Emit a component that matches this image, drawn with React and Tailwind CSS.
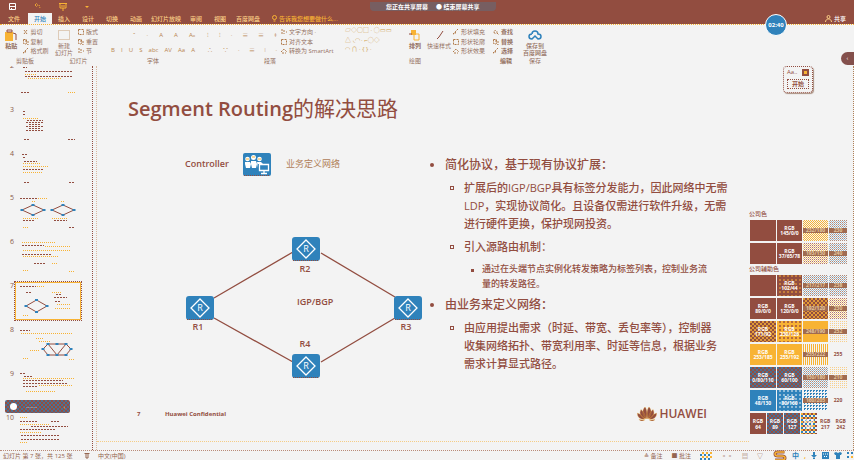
import React from "react";

const TABS = [
  ["文件", "w-7"],
  ["开始", "w-6"],
  ["插入", "w-6"],
  ["设计", "w-6"],
  ["切换", "w-6"],
  ["动画", "w-6"],
  ["幻灯片放映", "w-9"],
  ["审阅", "w-6"],
  ["视图", "w-6"],
  ["百度网盘", "w-8"],
];

function Badge({ className }) {
  return (
    <div className={"absolute z-10 flex h-[22px] w-[22px] items-center justify-center rounded-full border border-white bg-[#2f82bb] text-[6px] font-bold text-white " + className}>
      02:40
    </div>
  );
}

function Header() {
  return (
    <header className="relative h-6 shrink-0 bg-[#924d40] text-[#fbcf86]">
      <div className="flex h-[13px] items-center">
        <div className="flex w-[370px] items-center gap-[18px] pl-[9px]">
          <svg className="h-[7px] w-[7px]" viewBox="0 0 7 7" fill="none" stroke="#fff">
            <path d="M.5 .5h6v6h-6zM.5 3.5h6M2.5 5v2" />
          </svg>
          <svg className="h-[7px] w-[7px]" viewBox="0 0 7 7" fill="none" stroke="#f8b334">
            <path d="M1 2h4l1 3M1 2l2-2M1 2l2 2" strokeDasharray="1 1" />
          </svg>
          <svg className="h-2 w-2" viewBox="0 0 8 8" fill="none" stroke="#f8b334">
            <path d="M0 .5h8M1 1v4h6V1M4 5v3M2 3h4" />
          </svg>
          <svg className="h-1 w-1" viewBox="0 0 4 4" fill="#f8b334"><path d="M0 1h4L2 3z" /></svg>
        </div>
        <div className="flex h-[9px] items-center gap-2 rounded-b bg-[#775e61] px-4 text-[6px] font-bold leading-none text-white">
          <span>您正在共享屏幕</span>
          <span>● 结束屏幕共享</span>
        </div>
      </div>
      <div className="flex h-[11px] items-center text-[6px] font-medium leading-none">
        {TABS.map(([name, width], i) => (
          <button key={name} type="button" className={"h-full shrink-0 text-center " + width + (i === 1 ? " bg-[#f3f3f3] text-[#2f82bb]" : "")}>
            {name}
          </button>
        ))}
        <label htmlFor="tell" className="ml-2 flex shrink-0 items-center">
          <svg className="mr-[2px] h-[7px] w-[5px]" viewBox="0 0 5 7" fill="none" stroke="#f8b334"><circle cx="2.5" cy="2.5" r="2" /><path d="M1.500 6h2" /></svg>
        </label>
        <input id="tell" aria-label="操作说明搜索" placeholder="告诉我您想要做什么..." className="h-full w-32 bg-transparent text-[#f8b334] outline-none placeholder:text-[#f8b334]" />
        <button type="button" className="ml-auto mr-2 flex items-center gap-[2px] text-white">
          <svg className="h-[7px] w-[7px]" viewBox="0 0 7 7" fill="none" stroke="#fbcf86"><circle cx="3.500" cy="2" r="1.500" /><path d="M.5 7c0-4 6-4 6 0" /></svg>
          共享
        </button>
      </div>
      <Badge className="right-[67px] top-[14px]" />
    </header>
  );
}

function Mark({ kind }) {
  const paths = {
    cut: "M1 1l3 4M4 1L1 5",
    copy: "M.5 .5h3v4h-3zM2 2h3v4H2",
    brush: "M5 0L2 3M0 5l2-2 1 1z",
    grid: "M.5 .5h5v5h-5z",
    shape: "M0 4l3-3 3 3M1 5h4",
    find: "M1 3a1.500 1.500 0 1 0 3 0a1.500 1.500 0 1 0-3 0M4 4l2 2",
    text: "M1 0v6M3 1v4M5 3h1",
  };
  return (
    <svg className="h-[6px] w-[6px] shrink-0" viewBox="0 0 6 6" fill="none" stroke="#b07a4a" strokeDasharray="2 1">
      <path d={paths[kind]} />
    </svg>
  );
}

function Stack({ items, className }) {
  return (
    <div className={"flex flex-col " + className}>
      {items.map(([kind, label]) => (
        <button key={label} type="button" className="flex h-[10px] items-center gap-[2px] whitespace-nowrap">
          <Mark kind={kind} />
          {label}
        </button>
      ))}
    </div>
  );
}

function Group({ name, className, children }) {
  return (
    <section className={"flex shrink-0 flex-col " + className}>
      <div className="flex h-[31px] pt-[2px]">{children}</div>
      <div className="text-center leading-[10px]">{name}</div>
    </section>
  );
}

function Big({ lines, className, children }) {
  return (
    <button type="button" className={"flex flex-col items-center text-center leading-[7px] " + className}>
      <svg className="mb-[2px] mt-[2px] h-[12px] w-[14px] shrink-0" viewBox="0 0 14 12" fill="none">{children}</svg>
      {lines.map((l) => <span key={l} className="whitespace-nowrap">{l}</span>)}
    </button>
  );
}

function Glyphs({ items }) {
  return (
    <div className="flex h-[15px] items-center justify-between text-[#b98550]">
      {items.map((g, i) => (
        <button key={i} type="button" className="leading-none">{g}</button>
      ))}
    </div>
  );
}

function Ribbon() {
  return (
    <div className="flex h-[42px] shrink-0 overflow-hidden border-t border-dotted border-[#f8b334] text-[6px] leading-none text-[#94705f]">
      <Group name="剪贴板" className="w-[50px]">
        <Big lines={["粘贴"]} className="w-[23px] font-bold">
          <path d="M1 3h8v9H1z" fill="#f8b334" /><path d="M3 1h5v2H3zM9 4l3 1v6" stroke="#924d40" />
        </Big>
        <Stack className="w-7" items={[["cut", "剪切"], ["copy", "复制"], ["brush", "格式刷"]]} />
      </Group>
      <Group name="幻灯片" className="w-[57px]">
        <Big lines={["新建", "幻灯片"]} className="w-[28px]">
          <path d="M1.500 1.500h11v9h-11z" stroke="#c9a27c" strokeDasharray="1 1" />
        </Big>
        <Stack className="w-7" items={[["grid", "版式"], ["copy", "重置"], ["text", "节"]]} />
      </Group>
      <Group name="字体" className="w-[92px]">
        <div className="w-full px-1">
          <Glyphs items={["", "", "ˇ", "·", "A", "A", "Aₒ"]} />
          <Glyphs items={["B", "I", "U", "S", "abc", "AV", "Aa", "A"]} />
        </div>
      </Group>
      <Group name="段落" className="w-[142px]">
        <div className="flex w-full pl-2">
          <div className="w-[70px]">
            <Glyphs items={["⁝", "⁝", "·", "≡", "≡", "‡"]} />
            <Glyphs items={["∴", "∵", "·", "≡", "⁞", "·"]} />
          </div>
          <Stack className="ml-1" items={[["text", "文字方向 ·"], ["grid", "对齐文本"], ["shape", "转换为 SmartArt"]]} />
        </div>
      </Group>
      <Group name="绘图" className="w-[148px]">
        <div className="flex w-[64px] flex-col justify-between pb-1 pl-1 text-[#cfa04e]">
          <span>▱◇○□ · ◌▭▭</span><span>△ ◟◠ · ⌐◌◇</span><span>◠ ∩ · {"{ } ·"}</span>
        </div>
        <Big lines={["排列"]} className="w-5 font-bold"><path d="M3 1h5v5H3z" fill="#f8b334" /><path d="M6 5h5v6H6z" stroke="#f8b334" /><path d="M1 5h3" stroke="#924d40" /></Big>
        <Big lines={["快速样式"]} className="w-7"><path d="M11 2L7 8M5 10l2-2" stroke="#924d40" /></Big>
        <Stack className="" items={[["brush", "形状填充"], ["grid", "形状轮廓"], ["shape", "形状效果"]]} />
      </Group>
      <Group name="编辑" className="w-[34px] font-bold">
        <Stack className="pl-1" items={[["find", "查找"], ["copy", "替换"], ["brush", "选择"]]} />
      </Group>
      <Group name="保存" className="w-6">
        <Big lines={["保存到", "百度网盘"]} className="w-full font-medium">
          <path d="M4 5a3 3 0 0 1 6 0c4 0 4 5 0 5L7 7l-3 3C0 10 0 5 4 5" stroke="#2f82bb" strokeWidth="1.500" />
        </Big>
      </Group>
    </div>
  );
}

function Diamond({ x, y, w, h }) {
  const d = `M${x} ${y + h / 2}l${w / 2} ${-h / 2}l${w / 2} ${h / 2}l${-w / 2} ${h / 2}z`;
  const dots = [[x, y + h / 2], [x + w / 2, y], [x + w, y + h / 2], [x + w / 2, y + h]];
  return (
    <g>
      <path d={d} fill="none" stroke="#924d40" />
      {dots.map(([a, b]) => <rect key={a + "-" + b} x={a - 1.5} y={b - 1} width="3" height="2" fill="#2f82bb" />)}
    </g>
  );
}

function Mesh() {
  return (
    <g>
      <path d="M28 23l5-5h18l5 5-5 6H33zM33 18l9 11 9-11" fill="none" stroke="#924d40" />
      {[[28, 23], [33, 18], [42, 18], [51, 18], [56, 23], [33, 29], [42, 29], [51, 29]].map(([a, b]) => (
        <rect key={a + "-" + b} x={a - 1.5} y={b - 1} width="3" height="2" fill="#2f82bb" />
      ))}
    </g>
  );
}

function Rows({ list }) {
  return list.map(([x, y, w, c], i) => (
    <path key={i} d={`M${x} ${y + 0.5}h${w}`} stroke={c ? "#f8b334" : "#924d40"} strokeDasharray={c ? "1 1" : "2 1"} />
  ));
}

const THUMBS = [
  { n: 2, rows: [[8, 5, 4], [10, 9, 48], [10, 12, 12, 1], [10, 14, 47], [13, 16, 34, 1], [6, 30, 8], [53, 30, 7, 1]] },
  { n: 3, rows: [[8, 5, 3], [8, 8, 3], [8, 12, 16, 1], [12, 14, 16], [11, 16, 18], [14, 18, 11], [11, 20, 18], [14, 22, 12], [11, 24, 17], [9, 33, 5], [53, 33, 7]] },
  { n: 4, rows: [[7, 4, 5], [8, 7, 3], [9, 11, 13], [8, 13, 18, 1], [8, 16, 25, 1], [8, 19, 20], [8, 22, 20, 1], [9, 32, 5], [54, 32, 6]] },
  { n: 5, rows: [[5, 4, 18], [23, 4, 9, 1], [17, 7, 3, 1], [46, 7, 3, 1], [8, 24, 16, 1], [8, 26, 12], [37, 24, 16, 1], [39, 26, 13], [8, 33, 5, 1], [54, 33, 6]], diamonds: [[7, 11, 22, 10], [37, 11, 22, 10]] },
  { n: 6, rows: [[7, 4, 34, 1], [7, 7, 22], [30, 8, 25, 1], [8, 12, 48, 1], [7, 16, 29], [8, 18, 35, 1], [19, 25, 12], [37, 25, 5, 1], [8, 32, 5, 1], [54, 33, 6, 1]] },
  { n: 7, rows: [[5, 4, 16], [22, 4, 7, 1], [11, 10, 6], [37, 10, 10, 1], [41, 12, 5], [39, 15, 13], [40, 19, 5], [42, 22, 14, 1], [40, 26, 15, 1], [8, 33, 5, 1]], diamonds: [[11, 18, 21, 12]] },
  { n: 8, rows: [[5, 4, 10], [6, 7, 52, 1], [21, 12, 8, 1], [24, 15, 12, 1], [15, 24, 10, 1], [8, 32, 5, 1], [54, 33, 6, 1]], mesh: true },
  { n: 9, rows: [[5, 3, 5], [9, 6, 9], [8, 8, 51, 1], [8, 10, 40], [8, 13, 45], [8, 16, 15], [24, 15, 34, 1], [11, 21, 30, 1]] },
  { n: 10, rows: [[5, 3, 8, 1], [5, 7, 17], [36, 7, 8], [5, 10, 30, 1], [16, 12, 37], [5, 15, 36], [5, 18, 22, 1], [6, 21, 39], [6, 25, 39], [5, 28, 8, 1]] },
];

function Thumbnails() {
  return (
    <nav aria-label="幻灯片" className="relative w-[97px] shrink-0">
      <div className="absolute inset-0 overflow-hidden">
        <ol className="-mt-1 flex flex-col gap-[6px]">
          {THUMBS.map((t) => (
            <li key={t.n} className="flex h-[38px]">
              <span className="w-[15px] pr-[1px] text-right text-[7px] font-medium leading-[7px] text-[#8a5a4a]">{t.n}</span>
              <button type="button" aria-label={"第 " + t.n + " 张"} className={"h-[38px] w-[66px] " + (t.n === 7 ? "outline outline-1 outline-dotted outline-[#924d40] ring-1 ring-inset ring-[#f8b334]" : "")}>
                <svg className="h-[38px] w-[66px]" viewBox="0 0 66 38">
                  <Rows list={t.rows} />
                  {t.mesh && <Mesh />}
                  {(t.diamonds || []).map(([x, y, w, h]) => <Diamond key={x} x={x} y={y} w={w} h={h} />)}
                </svg>
              </button>
            </li>
          ))}
        </ol>
      </div>
      <div className="absolute inset-y-0 right-1 w-px border-l border-dotted border-[#924d40]" />
      <div className="absolute inset-y-0 right-0 w-px border-l border-dotted border-[#d9b9a0]" />
      <div className="absolute left-[5px] top-[334px] flex h-[13px] w-[65px] items-center rounded-[2px] bg-[conic-gradient(#924d40_25%,#4a7094_0_50%,#924d40_0_75%,#4a7094_0)] bg-[length:4px_4px] px-[5px] text-[6px] text-[#f3f3f3]">
        <span className="h-[7px] w-[7px] rounded-full bg-white" />
        <span className="ml-[9px] leading-none">·······</span>
        <span className="ml-auto leading-none text-[#f8b334]">‹</span>
      </div>
    </nav>
  );
}

function Router({ x, y, label, lx, ly }) {
  return (
    <g>
      <rect x={x} y={y} width="28" height="24" rx="3" fill="#2f82bb" />
      <path d={`M${x + 1} ${y + 23.5}h26`} stroke="#924d40" strokeDasharray="1 1" />
      <path d={`M${x + 14} ${y + 3}l9 9l-9 9l-9 -9z`} fill="none" stroke="#fff" strokeWidth="1.3" />
      <text x={x + 14} y={y + 15} textAnchor="middle" fontSize="9" fontWeight="500" fill="#fff">R</text>
      <text x={lx} y={ly} textAnchor="middle" fontSize="9" fontWeight="600" fill="#924d40">{label}</text>
    </g>
  );
}

function Topology() {
  return (
    <svg className="mt-[61px] block h-[142px] w-[238px]" viewBox="0 0 238 142" role="img" aria-label="IGP/BGP">
      <path d="M28 61L107 15M135 16L209 60M28 81L107 125M135 125L209 81" stroke="#924d40" strokeWidth="1.3" fill="none" />
      <Router x={106} y={0} label="R2" lx={119} ly={35} />
      <Router x={0} y={59} label="R1" lx={12} ly={93} />
      <Router x={208} y={59} label="R3" lx={220} ly={93} />
      <Router x={106} y={117} label="R4" lx={119} ly={110} />
      <text x="111" y="68" fontSize="9" fontWeight="600" fill="#924d40">IGP/BGP</text>
    </svg>
  );
}

function ControllerIcon() {
  return (
    <svg className="h-[23px] w-7" viewBox="0 0 28 23">
      <rect width="28" height="23" rx="2" fill="#2f82bb" />
      <path d="M1 22.500h26" stroke="#924d40" strokeDasharray="1 1" />
      <g fill="#fff">
        <circle cx="4.500" cy="6" r="2.300" /><circle cx="10.500" cy="4.500" r="2.500" /><circle cx="16.500" cy="6" r="2.300" />
        <path d="M2 9h5l1 2-1 4H3l-1-4zM8 8h5l1 3-1 4H9l-1-4zM14 9h4l2 2h-5v4z" />
      </g>
      <path d="M3 6h3M9 4h3M15 6h3" stroke="#f8b334" />
      <path d="M16.500 11.500h9v6h-9zM21 18v2M18 20.500h6" fill="#2f82bb" stroke="#fff" strokeWidth="1.300" />
    </svg>
  );
}

function Bullet({ level, lines }) {
  const styles = [
    ["text-xs leading-[18px] pl-0 font-medium", "w-[15px]"],
    ["text-[11px] leading-[18px] pl-[20px] font-medium", "w-[14px]"],
    ["text-[9px] leading-[15px] pl-[41px] font-medium", "w-[11px]"],
  ];
  const marks = ["h-1 w-1 rounded-full bg-[#924d40]", "h-1 w-1 border border-[#924d40]", "h-[3px] w-[3px] bg-[#924d40]"];
  return (
    <li className={"flex whitespace-nowrap " + styles[level][0]}>
      <span className={"flex h-[18px] shrink-0 items-center " + styles[level][1]}>
        <span className={marks[level]} />
      </span>
      <span>{lines.map((l) => <span key={l} className="block">{l}</span>)}</span>
    </li>
  );
}

function Logo() {
  return (
    <div className="flex items-center gap-[2px]">
      <svg className="h-[14px] w-5" viewBox="0 0 20 14" fill="#924d40" stroke="#f8b334" strokeWidth=".3">
        <path d="M9.500 12C5 8 5 3 8 0c2 2 2.500 7 1.500 12zM10.500 12C15 8 15 3 12 0c-2 2-2.500 7-1.500 12zM8.500 12C3 10 2 6 4 2.500 7 5 8.500 8 8.500 12zM11.500 12C17 10 18 6 16 2.500 13 5 11.500 8 11.500 12zM7.500 12.500C3 12.500 0 10 .5 6 4 7.500 6.500 9.500 7.500 12.500zM12.500 12.500C17 12.500 20 10 19.500 6 16 7.500 13.500 9.500 12.500 12.500zM7.500 13.200C5 14.500 3 14 2 12.500zM12.500 13.200C15 14.500 17 14 18 12.500z" />
      </svg>
      <span className="text-xs font-semibold leading-none">HUAWEI</span>
    </div>
  );
}

function Slide() {
  return (
    <main className="flex min-w-0 flex-1 flex-col text-[#924d40]">
      <h1 className="mt-[26px] flex items-baseline whitespace-nowrap pl-[31px] text-[21px] leading-8">
        <span className="text-[20px] font-semibold">Segment Routing</span>
        <span>的解决思路</span>
      </h1>
      <div className="flex">
        <section className="w-[333px] shrink-0 pl-[88px] pt-[27px]">
          <div className="flex h-[24px] items-center text-[9px]">
            <b className="w-[58px] font-semibold">Controller</b>
            <ControllerIcon />
            <span className="pl-[15px] text-[#b08058]">业务定义网络</span>
          </div>
          <div className="pl-px"><Topology /></div>
        </section>
        <ul className="flex flex-col gap-[5px] pt-[31px]">
          <Bullet level={0} lines={["简化协议，基于现有协议扩展："]} />
          <Bullet level={1} lines={["扩展后的IGP/BGP具有标签分发能力，因此网络中无需", "LDP，实现协议简化。且设备仅需进行软件升级，无需", "进行硬件更换，保护现网投资。"]} />
          <Bullet level={1} lines={["引入源路由机制："]} />
          <Bullet level={2} lines={["通过在头端节点实例化转发策略为标签列表，控制业务流", "量的转发路径。"]} />
          <Bullet level={0} lines={["由业务来定义网络："]} />
          <Bullet level={1} lines={["由应用提出需求（时延、带宽、丢包率等），控制器", "收集网络拓扑、带宽利用率、时延等信息，根据业务", "需求计算显式路径。"]} />
        </ul>
      </div>
      <footer className="mt-auto flex h-[54px] items-center pl-10 pr-[42px] text-[6px] font-bold">
        <span className="w-7">7</span>
        <span>Huawei Confidential</span>
        <span className="ml-auto"><Logo /></span>
      </footer>
      <div className="mb-2 border-t border-dotted border-[#f5cd86]" />
    </main>
  );
}

const FILLS = {
  brown: "bg-[#924d40]",
  yellow: "bg-[#f8b334]",
  blue: "bg-[#2f82bb]",
  brownBlue: "bg-[conic-gradient(#924d40_25%,#4a7094_0_50%,#924d40_0_75%,#4a7094_0)] bg-[length:4px_4px]",
  brownYellow: "bg-[conic-gradient(#924d40_25%,#e09a37_0_50%,#924d40_0_75%,#e09a37_0)] bg-[length:4px_4px]",
  brownDots: "bg-[#924d40] bg-[conic-gradient(#c57d3b_25%,transparent_0)] bg-[length:4px_4px]",
  yellowDots: "bg-[conic-gradient(#b56a3c_25%,#f8b334_0)] bg-[length:4px_4px]",
  blueDots: "bg-[conic-gradient(#8dbad8_25%,#2f82bb_0)] bg-[length:4px_4px]",
  yellowLight: "bg-[conic-gradient(#f8b334_25%,#f3f3f3_0_50%,#f8b334_0_75%,#f3f3f3_0)] bg-[length:2px_2px]",
  stripes: "bg-[linear-gradient(90deg,#f8b334_50%,#f3f3f3_0)] bg-[length:2px_2px]",
  mix: "bg-[conic-gradient(#924d40_25%,#f3f3f3_0_50%,#2f82bb_0_75%,#f8b334_0)] bg-[length:4px_4px]",
  mixFine: "bg-[conic-gradient(#b9786a_25%,#f3f3f3_0_50%,#f8c873_0_75%,#f3f3f3_0)] bg-[length:2px_2px]",
  grey: "bg-[conic-gradient(#b08a78_25%,#f3f3f3_0_50%,#9db9cd_0_75%,#f3f3f3_0)] bg-[length:2px_2px]",
  pale: "bg-[conic-gradient(#f8d08c_25%,#f3f3f3_0)] bg-[length:2px_2px]",
  blueLight: "bg-[conic-gradient(#2f82bb_25%,#f3f3f3_0)] bg-[length:3px_3px]",
  none: "",
};

const CORPORATE = [
  [["brown", ""], ["brown", "145/0/0"], ["yellowLight", "232/180"], ["grey", "230"]],
  [["brown", ""], ["brown", "37/65/78"], ["mixFine", "193/150"], ["grey", "240"]],
];
const SECONDARY = [
  [["brown", ""], ["brownDots", "102/44"], ["grey", "217/217"], ["grey", "238"]],
  [["brown", "89/0/0"], ["brown", "120/0/0"], ["brownYellow", "192/120"], ["mixFine", "230"]],
  [["brownYellow", "171/92"], ["yellowDots", "230/126"], ["yellow", "248/190"], ["pale", "252"]],
  [["yellow", "253/185"], ["yellow", "255/192"], ["stripes", "255/222"], ["none", "255"]],
  [["brownBlue", "0/80/110"], ["brownBlue", "60/100"], ["grey", "150/180"], ["pale", "210"]],
  [["blue", "48/130"], ["blueDots", "80/160"], ["blueLight", "160/205"], ["none", "220"]],
];

function Swatch({ fill, value, index }) {
  const light = index > 1;
  return (
    <td className={"h-[21px] p-0 text-center text-[5px] font-bold leading-[5px] " + FILLS[fill] + (light ? " text-[#924d40]" : " text-white")}>
      {value && !light && <div>RGB</div>}
      {value && <div className={"whitespace-nowrap " + (light && fill !== "none" ? "bg-[#a06b50] text-[#e3c79f]" : "")}>{value}</div>}
    </td>
  );
}

function SwatchTable({ rows, label }) {
  return (
    <table className="w-[99px] table-fixed border-separate border-spacing-x-px border-spacing-y-[2px]" aria-label={label}>
      <colgroup><col className="w-[26px]" /><col className="w-[25px]" /><col className="w-[25px]" /><col /></colgroup>
      <tbody>
        {rows.map((row, r) => (
          <tr key={r}>{row.map(([fill, value], i) => <Swatch key={i} fill={fill} value={value} index={i} />)}</tr>
        ))}
      </tbody>
    </table>
  );
}

function Palette() {
  const last = [["brown", "64"], ["brownBlue", "89"], ["brownBlue", "127"], ["mix", "191"], ["none", "217"], ["none", "242"]];
  return (
    <aside className="relative w-[105px] shrink-0 text-[#924d40]">
      <div className="pt-[144px] text-[6px] font-medium leading-[8px]">公司色</div>
      <SwatchTable rows={CORPORATE} label="公司色" />
      <div className="text-[6px] font-medium leading-[7px]">公司辅助色</div>
      <SwatchTable rows={SECONDARY} label="公司辅助色" />
      <div className="flex w-[99px] gap-px pl-px text-center text-[5px] font-bold leading-[6px]">
        {last.map(([fill, v], i) => (
          <div key={v} className={"flex h-[21px] flex-col justify-center " + FILLS[fill] + (i < 4 ? " w-4 text-white" : " flex-1")}>
            <span>RGB</span><span>{v}</span>
          </div>
        ))}
      </div>
      <div className="absolute inset-y-0 right-0 border-r border-dotted border-[#b08058]" />
      <div className="absolute right-[41px] top-0 flex h-[27px] w-[30px] flex-col gap-[3px] rounded border border-dotted border-[#924d40] bg-[#f3f3f3] px-[3px] pt-px text-[6px] leading-none shadow-[1px_1px_1px_#a98f80]">
        <div className="flex h-2 items-center justify-between"><span>Aa..</span><span className="flex h-[7px] w-[7px] items-center justify-center bg-[#924d40]"><span className="h-[3px] w-[3px] bg-[#f8b334]" /></span></div>
        <button type="button" className="h-[10px] border border-dotted border-[#924d40] font-bold">开始</button>
      </div>
      <button type="button" aria-label="展开" className="absolute -top-[14px] right-0 flex h-[13px] w-[13px] items-center justify-center rounded-l-full bg-[#84504c] text-[6px] text-white">‹</button>
    </aside>
  );
}

function StatusBar() {
  return (
    <footer className="flex h-[10px] shrink-0 items-center border-t border-dotted border-[#b98a78] text-[6px] leading-none text-[#94654f]">
      <span className="w-[84px] whitespace-nowrap pl-[3px]">幻灯片 第 7 张，共 125 张</span>
      <svg className="h-[6px] w-[6px]" viewBox="0 0 6 6" fill="none" stroke="#94654f"><path d="M.5 .5h5M2 1v4h2V1" /></svg>
      <span className="ml-2">中文(中国)</span>
      <div className="ml-auto flex items-center gap-[9px]">
        <button type="button">≜ 备注</button>
        <button type="button">■ 批注</button>
        <span className="h-2 w-3 bg-[conic-gradient(#f8b334_25%,#f3f3f3_0_50%,#2f82bb_0_75%,#f3f3f3_0)] bg-[length:4px_4px]" />
        <span>▫▫</span>
        <span>▤</span>
        <span>▽</span>
      </div>
      <div className="ml-[10px] flex items-center gap-[5px] pr-px text-[7px] font-bold text-[#2f82bb]">
        <svg className="h-[12px] w-[14px]" viewBox="0 0 14 12" fill="none">
          <path d="M11.500 2H5C1 2 1 6 5 6h4c4 0 4 4 0 4H2" stroke="#924d40" strokeWidth="3" />
          <path d="M11.500 2H5C1 2 1 6 5 6h4c4 0 4 4 0 4H2" stroke="#f8b334" strokeWidth="1.5" />
        </svg>
        <span>中</span>
        <span className="text-[#f8b334]">,</span>
        <svg className="h-[7px] w-[6px]" viewBox="0 0 6 7" fill="#2f82bb"><path d="M2 0h2v3h2L3 6 0 3h2zM2 6h2v1H2z" /></svg>
        <svg className="h-[7px] w-[7px]" viewBox="0 0 7 7"><path d="M0 0h7v7H0z" fill="#2f82bb" /><path d="M1 2h5M2 4.500h3" stroke="#fff" strokeDasharray="1 1" /></svg>
        <svg className="h-[7px] w-2" viewBox="0 0 8 7" fill="#2f82bb"><path d="M0 1l2-1 2 1 2-1 2 1-1 2H6v4H2V3H1z" /></svg>
        <svg className="h-[7px] w-[6px]" viewBox="0 0 6 7" fill="#2f82bb"><path d="M0 0h2v2H0zM4 0h2v2H4zM0 4h2v2H0z" /><path d="M4 4h2v2H4z" fill="#f8b334" /></svg>
      </div>
    </footer>
  );
}

export default function App() {
  return (
    <div className="flex h-screen min-h-[460px] flex-col overflow-hidden bg-[#f3f3f3] font-['Open_Sans','Noto_Sans_CJK_SC',sans-serif]">
      <Header />
      <Ribbon />
      <div className="flex min-h-0 flex-1">
        <Thumbnails />
        <Slide />
        <Palette />
      </div>
      <StatusBar />
    </div>
  );
}
